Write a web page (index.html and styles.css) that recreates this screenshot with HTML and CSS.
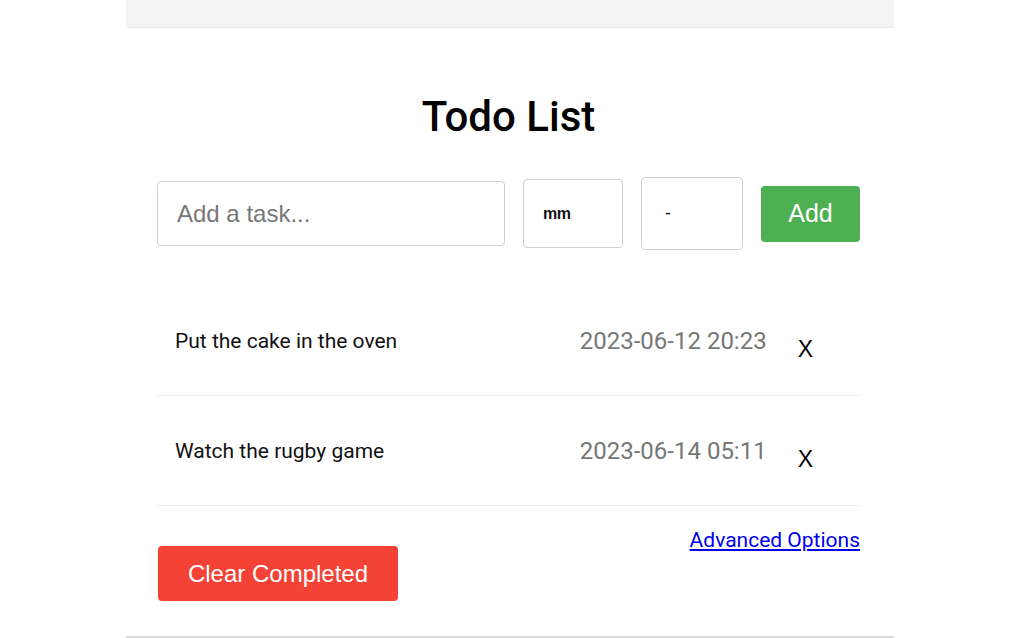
FILE: index.html
```html
<!DOCTYPE html>
<html lang="en">
<head>
<meta charset="utf-8">
<title>Todo List</title>
<link rel="stylesheet" href="styles.css">
</head>
<body>
<div class="page">
  <div class="topband"></div>
  <main class="card">
    <h1 class="title">Todo List</h1>
    <form class="entry">
      <input class="task-input" type="text" placeholder="Add a task...">
      <input class="small-input mm" type="text" value="mm">
      <input class="small-input dash" type="text" value="-">
      <button type="button" class="add-btn">Add</button>
    </form>
    <ul class="todo-list">
      <li class="todo-item">
        <span class="todo-text">Put the cake in the oven</span>
        <span class="todo-date">2023-06-12 20:23</span>
        <span class="todo-del">X</span>
      </li>
      <li class="todo-item">
        <span class="todo-text">Watch the rugby game</span>
        <span class="todo-date">2023-06-14 05:11</span>
        <span class="todo-del">X</span>
      </li>
    </ul>
    <div class="footer">
      <button type="button" class="clear-btn">Clear Completed</button>
      <a class="adv-link" href="#">Advanced Options</a>
    </div>
  </main>
</div>
</body>
</html>
```

FILE: styles.css
```css
* { box-sizing: border-box; }
html, body { margin: 0; padding: 0; background: #ffffff; }
body { font-family: Roboto, "Liberation Sans", Arial, sans-serif; }

.page {
  width: 768px;
  margin: 0 auto;
  height: 638px;
  display: flex;
  flex-direction: column;
}
.topband {
  height: 28px;
  background: #f4f4f4;
  border-bottom: 1px solid #ececec;
  flex: none;
}
.card {
  flex: 1;
  background: #fff;
  padding: 64px 34px 0 31px;
  border-bottom: 2px solid #dcdcdc;
  display: flex;
  flex-direction: column;
}
.title {
  margin: 0;
  text-align: center;
  font-family: Roboto, sans-serif;
  font-weight: 500;
  font-size: 42px;
  line-height: 50px;
  color: #000;
}
.entry {
  margin: 35px 0 0;
  display: flex;
  align-items: center;
  gap: 18px;
  height: 73px;
}
.entry input {
  font-family: "Liberation Sans", Arial, sans-serif;
  border: 1px solid #cfcfcf;
  border-radius: 4px;
  background: #fff;
  outline: none;
}
.task-input {
  width: 348px;
  height: 65px;
  padding: 0 19px;
  font-size: 24px;
  color: #222;
}
.task-input::placeholder { color: #777; }
.small-input {
  color: #111;
  font-size: 16px;
}
.mm {
  width: 100px;
  height: 69px;
  padding: 0 19px;
  font-weight: 700;
  letter-spacing: -0.5px;
}
.dash {
  width: 102px;
  height: 73px;
  padding: 0 23px;
  font-size: 18px;
}
.add-btn {
  width: 99px;
  height: 56px;
  border: none;
  border-radius: 4px;
  background: #4caf50;
  color: #fff;
  font-family: "Liberation Sans", Arial, sans-serif;
  font-size: 25px;
  padding: 0;
}
.todo-list {
  list-style: none;
  margin: 36px 0 0;
  padding: 0;
}
.todo-item {
  height: 110px;
  display: flex;
  align-items: center;
  padding: 0 18px;
  border-bottom: 1px solid #eeeeee;
}
.todo-text {
  flex: 1;
  font-size: 21px;
  color: #111;
}
.todo-date {
  font-size: 24px;
  color: #777;
}
.todo-del {
  font-family: "Liberation Sans", Arial, sans-serif;
  font-size: 23px;
  color: #000;
  margin: 18px 29px 0 31px;
}
.footer {
  display: flex;
  justify-content: space-between;
  align-items: flex-start;
  margin-top: 23px;
}
.clear-btn {
  margin-top: 17px;
  margin-left: 1px;
  width: 240px;
  height: 55px;
  border: none;
  border-radius: 4px;
  background: #f44336;
  color: #fff;
  font-family: "Liberation Sans", Arial, sans-serif;
  font-size: 24px;
  padding: 0;
}
.adv-link {
  font-size: 21px;
  line-height: 22px;
  color: #0000ee;
  text-decoration: underline;
}
```
